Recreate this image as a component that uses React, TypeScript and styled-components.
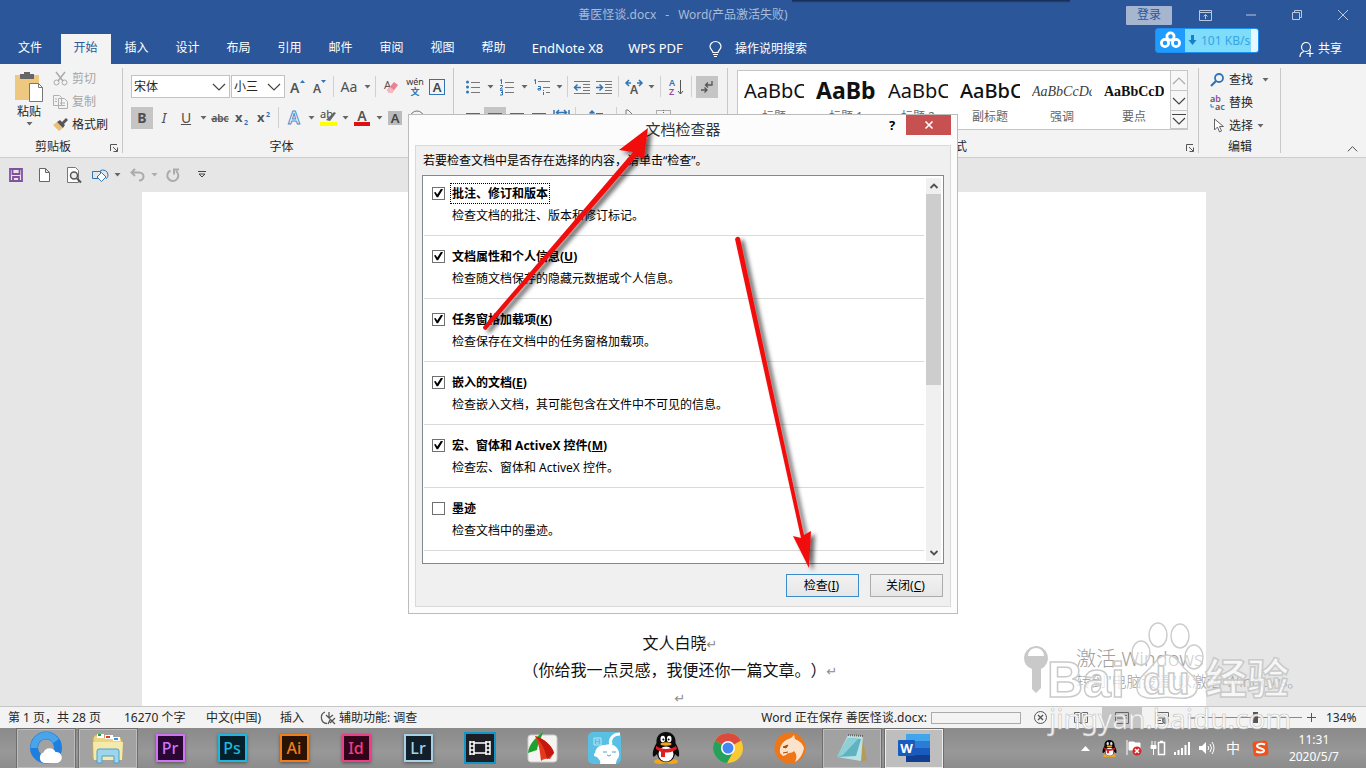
import React from "react";
import styled, { createGlobalStyle, css } from "styled-components";

const ui = `"Noto Sans", "Noto Sans CJK SC", sans-serif`;

const Global = createGlobalStyle`
  * { box-sizing: border-box; }
  body { margin: 0; font: 12px/16px ${ui}; color: #262626; }
  button, input, select { font: inherit; color: inherit; }
  svg { display: block; flex: none; overflow: visible; }
`;

const Window = styled.div`
  position: relative;
  display: flex;
  flex-direction: column;
  min-height: 100vh;
  overflow: hidden;
  background: #e6e6e6;
`;

/* ---------- title bar and tabs ---------- */
const Header = styled.header`
  position: relative;
  background: #2b579a;
  color: #fff;
`;
const TopShade = styled.div`
  position: absolute;
  top: 0;
  left: 58%;
  width: 278px;
  height: 3px;
  background: linear-gradient(#14294c, #2b579a);
`;
const TitleBar = styled.div`
  display: grid;
  grid-template-columns: 1fr auto 1fr;
  align-items: center;
  height: 34px;
  padding-bottom: 4px;
  color: #a9bcd9;
`;
const DocTitle = styled.div`
  grid-column: 2;
  display: flex;
  gap: 9px;
`;
const WindowTools = styled.div`
  display: flex;
  justify-content: flex-end;
  align-items: center;
`;
const Login = styled.button`
  width: 46px;
  height: 19px;
  margin-right: 10px;
  padding: 0;
  border: 0;
  border-radius: 1px;
  background: #a6b5d0;
  color: #2b579a;
  line-height: 18px;
`;
const WinButton = styled.button`
  display: grid;
  place-items: center;
  width: 46px;
  height: 30px;
  padding: 0;
  border: 0;
  background: none;
`;
const Tabs = styled.nav`
  display: flex;
  height: 30px;
`;
const Tab = styled.button<{ $w?: number; $active?: boolean; $latin?: boolean }>`
  width: ${p => p.$w ?? 51}px;
  padding: 0 1px 2px 0;
  border: 0;
  border-left: 1px solid transparent;
  background: ${p => (p.$active ? "#f3f3f3" : "none")};
  background-clip: padding-box;
  color: ${p => (p.$active ? "#2b579a" : "#fff")};
  font-size: ${p => (p.$latin ? 13 : 12)}px;
  white-space: nowrap;
`;
const TabTool = styled.button`
  display: flex;
  align-items: center;
  gap: 13px;
  margin-left: 14px;
  padding: 0;
  border: 0;
  background: none;
`;
const Share = styled(TabTool)`
  gap: 4px;
  margin-left: auto;
  margin-right: 24px;
`;
const NetBadge = styled.div`
  position: absolute;
  right: 107px;
  top: 28px;
  display: flex;
  width: 104px;
  height: 25px;
  border: 1px solid #1d8ff2;
  border-radius: 3px;
  overflow: hidden;
  background: linear-gradient(90deg, #1e9bff 29px, #7fdcfb 29px, #7fdcfb 95px, #e6f7ff 95px);
  color: #33a5e5;
  line-height: 23px;
`;
const NetSpeed = styled.span`
  display: flex;
  align-items: center;
  gap: 4px;
  padding-left: 3px;
  white-space: nowrap;
`;

/* ---------- ribbon ---------- */
const Ribbon = styled.section`
  display: flex;
  height: 94px;
  padding: 4px 0;
  border-bottom: 1px solid #cdcdcd;
  background: #f3f3f3;
`;
const Group = styled.div<{ $w: number }>`
  position: relative;
  display: grid;
  grid-template-rows: minmax(0, 1fr) 12px;
  flex: none;
  width: ${p => p.$w}px;
  padding: 0 8px;
  border-right: 1px solid #c8c8c8;
`;
const GroupLabel = styled.div<{ $launch?: boolean }>`
  display: flex;
  justify-content: center;
  align-items: center;
  padding-right: ${p => (p.$launch ? 16 : 0)}px;
  line-height: 12px;
`;
const Launcher = styled.button`
  position: absolute;
  right: 3px;
  bottom: 0;
  padding: 0;
  border: 0;
  background: none;
`;
const ClipArea = styled.div`
  display: flex;
  gap: 8px;
  padding: 4px 0 0 5px;
`;
const Paste = styled.button`
  display: flex;
  flex-direction: column;
  justify-content: flex-start;
  align-items: center;
  gap: 2px;
  width: 32px;
  padding: 0;
  border: 0;
  background: none;
`;
const SmallStack = styled.div`
  display: flex;
  flex-direction: column;
  margin-top: -5px;
`;
const SmallButton = styled.button<{ $off?: boolean }>`
  display: flex;
  align-items: center;
  gap: 4px;
  height: 23px;
  padding: 0;
  border: 0;
  background: none;
  color: ${p => (p.$off ? "#a6a6a6" : "#262626")};
  white-space: nowrap;
`;
const ToolRows = styled.div`
  display: flex;
  flex-direction: column;
  gap: 8px;
  padding-top: 7px;
`;
const ToolRow = styled.div`
  display: flex;
  align-items: center;
  height: 23px;
`;
const Tool = styled.button<{ $w?: number; $on?: boolean }>`
  display: flex;
  justify-content: center;
  align-items: center;
  flex: none;
  width: ${p => p.$w ?? 22}px;
  height: 22px;
  padding: 0;
  border: 0;
  background: ${p => (p.$on ? "#c5c5c5" : "none")};
  color: #505050;
  font-size: 14px;
`;
const Split = styled.i<{ $m?: number }>`
  flex: none;
  width: 1px;
  height: 21px;
  margin: 0 ${p => p.$m ?? 3}px;
  background: #d0d0d0;
`;
const SelectBox = styled.span<{ $w: number }>`
  position: relative;
  flex: none;
  width: ${p => p.$w}px;
  height: 23px;
  margin-right: 1px;
  svg {
    position: absolute;
    right: 4px;
    top: 8px;
    pointer-events: none;
  }
`;
const Select = styled.select`
  appearance: none;
  width: 100%;
  height: 100%;
  padding: 0 2px;
  border: 1px solid #c2c2c2;
  border-radius: 0;
  background: #fff;
`;
const Gallery = styled.div`
  display: flex;
  height: 60px;
  margin: 2px 2px 0 1px;
  border: 1px solid #c6c6c6;
  background: #fff;
`;
const StyleItem = styled.button`
  display: grid;
  grid-template-rows: 38px 16px;
  align-content: start;
  flex: none;
  width: 72px;
  padding: 0 6px;
  border: 0;
  background: none;
  color: #666;
`;
const Sample = styled.span<{ $kind: string }>`
  overflow: hidden;
  height: 38px;
  color: #111;
  font-size: 20px;
  line-height: 40px;
  text-align: left;
  white-space: nowrap;
  ${p => p.$kind === "h1" && css`font-size: 23px; font-weight: 700; line-height: 38px;`}
  ${p => p.$kind === "sub" && css`font-weight: 500;`}
  ${p => p.$kind === "em" && css`font: italic 14px/42px "Liberation Serif", serif; color: #404040;`}
  ${p => p.$kind === "key" && css`font: bold 14px/42px "Liberation Serif", serif;`}
`;
const GalleryNav = styled.div`
  display: grid;
  grid-template-rows: 20px 20px 1fr;
  width: 17px;
  margin-left: auto;
`;
const NavButton = styled.button`
  display: grid;
  place-items: center;
  padding: 0;
  border: 0;
  border-left: 1px solid #c6c6c6;
  border-bottom: 1px solid #c6c6c6;
  background: #f7f7f7;
`;
const EditStack = styled.div`
  padding-left: 3px;
`;
const Collapse = styled.button`
  align-self: flex-end;
  margin: 0 8px 0 auto;
  padding: 0;
  border: 0;
  background: none;
`;
const QuickBar = styled.div`
  display: flex;
  align-items: center;
  height: 34px;
  padding-left: 3px;
`;

/* ---------- document ---------- */
const Desk = styled.main`
  display: flex;
  flex: 1;
  min-height: 300px;
  padding: 0 160px 0 142px;
  overflow: hidden;
  background: #e6e6e6;
`;
const Page = styled.article`
  display: flex;
  flex: 1;
  flex-direction: column;
  justify-content: flex-end;
  align-items: center;
  margin-bottom: -4px;
  padding-left: 12px;
  background: #fff;
  color: #111;
  font: 16px/27px "Noto Sans CJK SC", sans-serif;
  text-spacing-trim: space-all;
`;
const Para = styled.p`
  height: 27px;
  margin: 0;
`;
const Mark = styled.span`
  color: #8c8c8c;
  font: 13px/20px "DejaVu Sans", sans-serif;
`;

/* ---------- status bar ---------- */
const Status = styled.footer`
  display: flex;
  align-items: center;
  height: 22px;
  padding: 0 8px;
  border-top: 1px solid #c6c6c6;
  background: #f3f3f3;
  white-space: nowrap;
`;
const StatusText = styled.span<{ $w?: number }>`
  display: flex;
  align-items: center;
  gap: 3px;
  min-width: ${p => p.$w ?? 0}px;
`;
const StatusRight = styled.div`
  display: flex;
  align-items: center;
  height: 21px;
  margin-left: auto;
`;
const Saving = styled.label`
  display: flex;
  align-items: center;
  gap: 4px;
`;
const SaveProgress = styled.progress`
  appearance: none;
  width: 90px;
  height: 12px;
  border: 1px solid #ababab;
  background: #f3f3f3;
  &::-webkit-progress-bar { background: #f3f3f3; }
`;
const Zoom = styled.input`
  appearance: none;
  width: 100px;
  height: 16px;
  margin: 0;
  background: linear-gradient(#8a8a8a, #8a8a8a) center / 100% 1px no-repeat;
  &::-webkit-slider-thumb {
    appearance: none;
    width: 5px;
    height: 11px;
    background: #555;
  }
`;
const Percent = styled.span`
  width: 32px;
  margin-left: 6px;
`;

/* ---------- taskbar ---------- */
const Taskbar = styled.div`
  display: flex;
  align-items: center;
  height: 40px;
  padding-left: 15px;
  background: linear-gradient(#8a8a8a, #989898 60%, #8c8c8c);
`;
const Task = styled.button<{ $open?: boolean; $front?: boolean }>`
  display: grid;
  place-items: center;
  flex: none;
  width: 58px;
  height: 39px;
  margin: 0 2px;
  padding: 0;
  border: 1px solid ${p => (p.$front ? "#eee" : p.$open ? "#bcbcbc" : "transparent")};
  outline: ${p => (p.$open ? "1px solid #6e6e6e" : "none")};
  background: ${p => (p.$front ? "#bebebe" : p.$open ? "#a2a2a2" : "none")};
`;
const Adobe = styled.span<{ $c: string; $bg: string }>`
  display: grid;
  place-items: center;
  width: 29px;
  height: 28px;
  border: 2px solid ${p => p.$c};
  background: ${p => p.$bg};
  box-shadow: 0 1px 3px #555;
  color: ${p => p.$c};
  font-size: 16px;
  line-height: 24px;
  font-weight: 500;
`;
const Tray = styled.div`
  display: flex;
  align-items: center;
  margin-left: auto;
  padding-right: 27px;
`;
const TrayItem = styled.button<{ $w?: number }>`
  display: grid;
  place-items: center;
  width: ${p => p.$w ?? 24}px;
  height: 30px;
  padding: 0;
  border: 0;
  background: none;
  color: #fff;
  font-size: 14px;
`;
const Clock = styled.time`
  margin-left: 15px;
  color: #fff;
  line-height: 17px;
  text-align: center;
`;

/* ---------- dialog ---------- */
const Dialog = styled.section`
  position: absolute;
  top: 114px;
  left: 50%;
  width: 550px;
  margin-left: -275px;
  border: 1px solid #bcbcbc;
  background: #fcfcfc;
  color: #000;
`;
const DialogHead = styled.div`
  display: grid;
  grid-template-columns: 1fr auto 1fr;
  height: 30px;
  padding: 0 6px;
`;
const DialogTitle = styled.h1`
  grid-column: 2;
  margin: 0;
  color: #333;
  font-size: 15px;
  font-weight: 400;
  line-height: 28px;
`;
const HeadButtons = styled.div`
  display: flex;
  justify-content: flex-end;
  align-items: flex-start;
`;
const HelpButton = styled.button`
  width: 28px;
  padding: 0;
  border: 0;
  background: none;
  font-weight: 700;
  font-size: 13px;
  line-height: 20px;
`;
const CloseButton = styled.button`
  display: grid;
  place-items: center;
  width: 45px;
  height: 20px;
  padding: 0;
  border: 0;
  background: #c75050;
`;
const DialogBody = styled.div`
  margin: 0 6px 6px;
  padding: 0 6px;
  border: 1px solid #d9d9d9;
  background: #f0f0f0;
`;
const Intro = styled.p`
  margin: 0;
  padding-left: 1px;
  line-height: 29px;
`;
const ListFrame = styled.div`
  display: flex;
  height: 389px;
  border: 1px solid #828790;
  background: #fff;
`;
const List = styled.ul`
  flex: 1;
  margin: 0;
  padding: 0 0 0 1px;
  overflow: hidden;
  list-style: none;
`;
const Item = styled.li`
  display: grid;
  grid-template-columns: 13px 1fr;
  grid-auto-rows: 22px;
  column-gap: 6px;
  align-items: center;
  padding: 9px 8px;
  border-bottom: 1px solid #d9d9d9;
  line-height: 18px;
  &:first-child { padding-top: 6px; }
`;
const Check = styled.input`
  appearance: none;
  display: grid;
  place-items: center;
  width: 13px;
  height: 13px;
  margin: 0;
  border: 1px solid #707070;
  background: #fff;
  &:checked::before {
    content: "";
    width: 9px;
    height: 9px;
    background: #000;
    clip-path: polygon(0 44%, 18% 40%, 36% 66%, 78% 4%, 100% 8%, 46% 96%, 30% 96%);
  }
`;
const ItemLabel = styled.label<{ $focus?: boolean }>`
  justify-self: start;
  padding: 1px 1px 0;
  font-weight: 700;
  outline: ${p => (p.$focus ? "1px dotted #000" : "none")};
`;
const ItemText = styled.span`
  grid-column: 2;
  padding: 2px 0 0 1px;
`;
const Scroll = styled.div`
  display: flex;
  flex-direction: column;
  width: 15px;
  margin: 2px;
  background: #f0f0f0;
`;
const ScrollArrow = styled.button`
  display: grid;
  place-items: center;
  height: 16px;
  padding: 0;
  border: 0;
  background: none;
`;
const Thumb = styled.div`
  height: 191px;
  margin-bottom: auto;
  background: #cdcdcd;
`;
const DialogFoot = styled.div`
  display: flex;
  justify-content: flex-end;
  gap: 11px;
  padding: 10px 1px 9px 0;
`;
const Push = styled.button<{ $main?: boolean }>`
  width: 73px;
  height: 23px;
  padding: 0 2px 0 0;
  border: 1px solid ${p => (p.$main ? "#3c8ccc" : "#acacac")};
  background: linear-gradient(#f2f2f2, #e6e6e6);
`;
const Pointers = styled.svg`
  position: absolute;
  left: 0;
  top: 0;
  pointer-events: none;
`;

/* ---------- watermarks ---------- */
const Overlay = styled.div`
  position: absolute;
  right: 50px;
  bottom: 28px;
  width: 300px;
  height: 126px;
  pointer-events: none;
`;

const Caret = ({ c = "#666" }: { c?: string }) => (
  <svg width="7" height="4" viewBox="0 0 7 4"><path d="M.5 0h6l-3 3.5z" fill={c} /></svg>
);
const Chev = ({ up = false, c = "#444", w = 14 }) => (
  <svg width={w} height="8" viewBox="0 0 14 8"><path d={up ? "M1 7l6-6 6 6" : "M1 1l6 6 6-6"} fill="none" stroke={c} strokeWidth="1.2" /></svg>
);
const Lines = ({ rows }: { rows: [number, number, number][] }) => (
  <svg width="16" height="16" viewBox="0 0 16 16">
    {rows.map(([x, y, l], i) => <path key={i} d={`M${x} ${y}.5h${l}`} stroke="#666" />)}
  </svg>
);
const LaunchIcon = () => (
  <svg width="9" height="9" viewBox="0 0 9 9"><path d="M.5 7V.5H7M3 3l4 4M7.500 3.500v4h-4" fill="none" stroke="#555" /></svg>
);
const BlueStroke = ({ d }: { d: string }) => <path d={d} fill="none" stroke="#2f75b5" strokeWidth="1.5" />;

const Penguin = ({ s }: { s: number }) => (
  <svg width={s} height={s} viewBox="0 0 32 32">
    <ellipse cx="10" cy="29.500" rx="6" ry="2.500" fill="#f5a51b" /><ellipse cx="22" cy="29.500" rx="6" ry="2.500" fill="#f5a51b" />
    <path d="M16 0c-6 0-10 4-9.500 11C5 14 2 19 3 24c1 2 3-1 4-2 1 5 4 8 9 8s8-3 9-8c1 1 3 4 4 2 1-5-2-10-3.500-13C26 4 22 0 16 0z" fill="#0b0b0b" />
    <ellipse cx="16" cy="22" rx="7.500" ry="7.500" fill="#fff" />
    <ellipse cx="12.800" cy="7" rx="2.300" ry="3.200" fill="#fff" /><ellipse cx="19.200" cy="7" rx="2.300" ry="3.200" fill="#fff" />
    <circle cx="13.400" cy="7.400" r="1" /><circle cx="18.600" cy="7.400" r="1" />
    <ellipse cx="16" cy="12" rx="5.500" ry="1.700" fill="#f5a51b" />
    <path d="M6 14c6 4 14 4 20 0l1 3c-4 3-8 3.500-12 3.500V25h-4v-5L6 17z" fill="#e31b23" />
  </svg>
);

const QQBrowser = () => (
  <svg width="34" height="34" viewBox="0 0 34 34">
    <circle cx="17" cy="16.500" r="12" fill="none" stroke="#1e7fe0" strokeWidth="8" />
    <path d="M5 17a12 12 0 0 1 22-7" fill="none" stroke="#4aa5e8" strokeWidth="7" />
    <path d="M15 32a5.500 5.500 0 0 1-.5-10.500 6.500 6.500 0 0 1 12-.5 5.600 5.600 0 0 1 2 11z" fill="#fff" />
  </svg>
);
const Explorer = () => (
  <svg width="34" height="32" viewBox="0 0 34 32">
    <path d="M2 6l2-3h8l2 3h16l1 3v18H2z" fill="#e9d585" stroke="#c4a94e" />
    <path d="M6 2h7v4H6zM14 3h8v4h-8zM22 5h7v4h-7z" fill="#fff" />
    <path d="M7 2h3v2H7z" fill="#27a035" /><path d="M15 4h4v2h-4z" fill="#d7402e" /><path d="M23 6h4v2h-4z" fill="#3d8fd9" />
    <path d="M2 10h30l-1 18H3z" fill="#f6e9ac" />
    <path d="M6 31V19q0-2 2-2h18q2 0 2 2v12h-5v-7H11v7z" fill="#9cd5ee" stroke="#4e9fc6" />
  </svg>
);
const Movie = () => (
  <svg width="32" height="32" viewBox="0 0 32 32">
    <rect x="1" y="1" width="30" height="30" fill="#1d1f24" stroke="#1296c8" strokeWidth="2" />
    <path d="M6 9v14M10 9v14M22 9v14M26 9v14M10 11h12M10 21h12M6 10h4M6 14h4M6 18h4M6 22h4M22 10h4M22 14h4M22 18h4M22 22h4" stroke="#fff" strokeWidth="1.500" />
  </svg>
);
const FastStone = () => (
  <svg width="32" height="32" viewBox="0 0 32 32">
    <rect x="2" y="3" width="29" height="27" rx="3" fill="#f4f4f2" stroke="#ccc" />
    <path d="M17 0C9 6 3 12 2 21l9-3c1-7 4-11 6-18z" fill="#1fa12e" />
    <path d="M9 4c4 8 5 15 6 25 4-3 6-2 9-2l4-6C26 13 18 7 9 4z" fill="#e5391c" /><path d="M9 4c7 7 10 13 12 23l7-6C26 13 18 7 9 4z" fill="#c4180f" />
  </svg>
);
const BlueBunny = () => (
  <svg width="33" height="32" viewBox="0 0 33 32">
    <rect width="33" height="32" rx="5" fill="#59c0e4" />
    <path d="M12 32c1-4-1-4-3-7-3 0-4-3-2-4 1-6 5-8 10-8 3-1 5-1 8 0 4 2 7 6 6 11-1 3-3 4-3 8z" fill="#fff" />
    <path d="M23 13c-2-5 1-11 9-11" fill="none" stroke="#fff" strokeWidth="3" />
    <path d="M15 20h4M24 20h4M19 23q2 2 4 0" stroke="#4aa6ca" fill="none" />
    <path d="M6 6h7v7H6zM8 8h3M8 11h3" stroke="#b8e6f6" fill="none" />
  </svg>
);
const Chrome = () => (
  <svg width="32" height="32" viewBox="0 0 32 32">
    <circle cx="16" cy="16" r="15" fill="#fbc932" />
    <path d="M16 16L3 8.500a15 15 0 0 1 26 0z" fill="#dc4a3d" />
    <path d="M3 8.500A15 15 0 0 0 15 31l6.500-11.500L16 16z" fill="#26a05a" />
    <circle cx="16" cy="16" r="7" fill="#fff" /><circle cx="16" cy="16" r="5.500" fill="#4486f4" />
  </svg>
);
const Cheetah = () => (
  <svg width="32" height="32" viewBox="0 0 32 32">
    <circle cx="16" cy="16" r="15.500" fill="#ef7617" />
    <path d="M6 21c-1-8 4-13 11-15l3-3 1 4c5 2 8 5 9 9-1 6-4 11-9 14 2-4 2-8-1-11-3 3-6 1-8 4l-3 1z" fill="#fbe3cb" />
    <path d="M9 15l5-2-2 3zM9 21l5-1" stroke="#a84a08" fill="#a84a08" />
  </svg>
);
const Notepad = () => (
  <svg width="32" height="30" viewBox="0 0 32 30">
    <path d="M26 3l5 24-6 2z" fill="#b59a5a" /><path d="M12 2l15 1-2 25-24-4z" fill="#b9e2e6" /><path d="M12 5l13 1-5 17-19 1z" fill="#5fb2bf" />
    <path d="M12 5l10 1-15 16-6 2z" fill="#8fd0d8" /><path d="M12 2l15 1" stroke="#666" strokeWidth="2" strokeDasharray="1 1" />
  </svg>
);
const WordIcon = () => (
  <svg width="32" height="30" viewBox="0 0 32 30">
    <rect x="8" y="1" width="24" height="7" fill="#41a5ee" /><rect x="8" y="8" width="24" height="7" fill="#2b7cd3" />
    <rect x="8" y="15" width="24" height="7" fill="#185abd" /><rect x="8" y="22" width="24" height="7" fill="#103f91" />
    <rect y="7" width="17" height="16" rx="1" fill="#185abd" />
    <text x="8.500" y="20" fontSize="13" fontWeight="700" fill="#fff" textAnchor="middle">W</text>
  </svg>
);

const items = [
  { t: "批注、修订和版本", k: "", d: "检查文档的批注、版本和修订标记。", on: true },
  { t: "文档属性和个人信息", k: "U", d: "检查随文档保存的隐藏元数据或个人信息。", on: true },
  { t: "任务窗格加载项", k: "K", d: "检查保存在文档中的任务窗格加载项。", on: true },
  { t: "嵌入的文档", k: "E", d: "检查嵌入文档，其可能包含在文件中不可见的信息。", on: true },
  { t: "宏、窗体和 ActiveX 控件", k: "M", d: "检查宏、窗体和 ActiveX 控件。", on: true },
  { t: "墨迹", k: "", d: "检查文档中的墨迹。", on: false },
];
const styleItems = [
  ["AaBbC", "标题", "h"], ["AaBb", "标题 1", "h1"], ["AaBbC", "标题 2", "h"],
  ["AaBbC", "副标题", "sub"], ["AaBbCcDc", "强调", "em"], ["AaBbCcD", "要点", "key"],
];

function FontGroup() {
  return (
    <Group $w={331}>
      <ToolRows>
        <ToolRow>
          <SelectBox $w={99}><Select aria-label="字体"><option>宋体</option></Select><Chev /></SelectBox>
          <SelectBox $w={54}><Select aria-label="字号"><option>小三</option></Select><Chev /></SelectBox>
          <Tool aria-label="增大字号"><svg width="16" height="18" viewBox="0 0 16 18"><text x="1" y="15" fontSize="14" fontWeight="600" fill="#555">A</text><path d="M11 5l2.500-3L16 5z" fill="#2f75b5" /></svg></Tool>
          <Tool aria-label="减小字号"><svg width="16" height="18" viewBox="0 0 16 18"><text x="2" y="15" fontSize="12" fontWeight="600" fill="#555">A</text><path d="M10 2h5l-2.500 3z" fill="#2f75b5" /></svg></Tool>
          <Split />
          <Tool $w={24}>Aa</Tool><Tool $w={12} aria-label="更多"><Caret /></Tool>
          <Split $m={2} />
          <Tool $w={26} aria-label="清除格式"><svg width="16" height="16" viewBox="0 0 16 16"><text x="1" y="10" fontSize="11" fill="#555">A</text><path d="M4 11l7-8 4 3-6 8H6z" fill="#ea8294" /><path d="M4 11l3-3 4 3-2 3H6z" fill="#f5b8c1" /></svg></Tool>
          <Tool aria-label="拼音指南"><svg width="18" height="18" viewBox="0 0 18 18"><text x="9" y="7" fontSize="9" textAnchor="middle" fill="#333">wén</text><text x="9" y="17" fontSize="9" fontWeight="700" textAnchor="middle" fill="#2f75b5">文</text></svg></Tool>
          <Tool aria-label="字符边框"><svg width="16" height="16" viewBox="0 0 16 16"><rect x=".5" y=".5" width="15" height="15" fill="none" stroke="#2f75b5" /><text x="8" y="13" fontSize="13" fontWeight="600" textAnchor="middle" fill="#444">A</text></svg></Tool>
        </ToolRow>
        <ToolRow>
          <Tool $on><b>B</b></Tool>
          <Tool><i>I</i></Tool>
          <Tool><u>U</u></Tool><Tool $w={12} aria-label="下划线"><Caret /></Tool>
          <Tool aria-label="删除线"><svg width="18" height="16" viewBox="0 0 18 16"><text x="9" y="12" fontSize="10" fontWeight="600" textAnchor="middle" fill="#555">abc</text><path d="M0 9h18" stroke="#555" /></svg></Tool>
          <Tool aria-label="下标"><svg width="14" height="16" viewBox="0 0 14 16"><text x="0" y="12" fontSize="13" fontWeight="700" fill="#555">x</text><text x="9" y="15" fontSize="7" fontWeight="700" fill="#2f75b5">2</text></svg></Tool>
          <Tool aria-label="上标"><svg width="14" height="16" viewBox="0 0 14 16"><text x="0" y="12" fontSize="13" fontWeight="700" fill="#555">x</text><text x="9" y="7" fontSize="7" fontWeight="700" fill="#2f75b5">2</text></svg></Tool>
          <Split />
          <Tool $w={24} aria-label="文本效果"><svg width="18" height="18" viewBox="0 0 18 18"><text x="9" y="15" fontSize="17" fontWeight="600" textAnchor="middle" fill="#fff" stroke="#4a8bcb">A</text></svg></Tool>
          <Tool $w={10} aria-label="更多"><Caret /></Tool>
          <Tool $w={24} aria-label="突出显示"><svg width="17" height="18" viewBox="0 0 17 18"><text x="0" y="9" fontSize="11" fill="#444">ab</text><path d="M6 11l8-8 2 1-6 8z" fill="#666" /><path d="M0 13h17v4H0z" fill="#ff0" /></svg></Tool>
          <Tool $w={10} aria-label="更多"><Caret /></Tool>
          <Tool $w={24} aria-label="字体颜色"><svg width="16" height="18" viewBox="0 0 16 18"><text x="8" y="12" fontSize="14" fontWeight="600" textAnchor="middle" fill="#555">A</text><path d="M0 13h16v4H0z" fill="#e01010" /></svg></Tool>
          <Tool $w={10} aria-label="更多"><Caret /></Tool>
          <Tool aria-label="字符底纹"><svg width="14" height="14" viewBox="0 0 14 14"><path d="M0 0h14v14H0z" fill="#bbb" /><text x="7" y="12" fontSize="13" fontWeight="600" textAnchor="middle" fill="#444">A</text></svg></Tool>
          <Tool aria-label="带圈字符"><svg width="16" height="16" viewBox="0 0 16 16"><circle cx="8" cy="8" r="7" fill="none" stroke="#777" /><path d="M4 7h8M8 4v2M5 10h6" stroke="#777" /></svg></Tool>
        </ToolRow>
      </ToolRows>
      <GroupLabel $launch>字体</GroupLabel>
    </Group>
  );
}

function ParagraphGroup() {
  const dots = [3, 8, 13];
  return (
    <Group $w={274}>
      <ToolRows>
        <ToolRow>
          <Tool aria-label="项目符号"><svg width="14" height="16" viewBox="0 0 14 16">{dots.map(y => <g key={y}><circle cx="1.500" cy={y} r="1.500" fill="#2f75b5" /><path d={`M5 ${y}.5h9`} stroke="#777" /></g>)}</svg></Tool>
          <Tool $w={12} aria-label="更多"><Caret /></Tool>
          <Tool aria-label="编号">
            <svg width="14" height="16" viewBox="0 0 14 16">
              <path d="M0 1.500l1.500-1V5M0 6.500h2.500v1.200L0 10h3M0 11.500h2.500V16H0M1 13.500h1.500" fill="none" stroke="#2f75b5" />
              <path d="M5 3.500h9M5 8.500h9M5 13.500h9" stroke="#777" />
            </svg>
          </Tool>
          <Tool $w={12} aria-label="更多"><Caret /></Tool>
          <Tool $w={24} aria-label="多级列表">
            <svg width="16" height="16" viewBox="0 0 16 16">
              <path d="M0 1.500l1.500-1V5M4 7.500h2.500V11H4V9.500h2.500M9.500 11v1M9.500 13v3" fill="none" stroke="#2f75b5" />
              <path d="M4 2.500h12M9 8.500h7M12 13.500h4" stroke="#777" />
            </svg>
          </Tool>
          <Tool $w={10} aria-label="更多"><Caret /></Tool>
          <Split />
          {[0, 1].map(k => <Tool key={k} aria-label={k ? "增加缩进" : "减少缩进"}><svg width="17" height="16" viewBox="0 0 17 16"><path d="M0 2.500h16M9 5.500h7M9 8.500h7M9 11.500h7M0 14.500h16" stroke="#777" /><BlueStroke d={k ? "M0 8.500h6M3.500 5.500l3 3-3 3" : "M7 8.500H1M3.500 5.500l-3 3 3 3"} /></svg></Tool>)}
          <Split />
          <Tool $w={24} aria-label="中文版式"><svg width="18" height="16" viewBox="0 0 18 16"><text x="9" y="15" fontSize="12" fontWeight="600" textAnchor="middle" fill="#555">A</text><BlueStroke d="M1 4h5M4 1L1 4l3 3M17 4h-5M14 1l3 3-3 3" /></svg></Tool>
          <Tool $w={10} aria-label="更多"><Caret /></Tool>
          <Split $m={4} />
          <Tool aria-label="排序"><svg width="16" height="18" viewBox="0 0 16 18"><text x="1" y="8" fontSize="9" fontWeight="600" fill="#2f75b5">A</text><text x="1" y="17" fontSize="9" fontWeight="600" fill="#8f4aa8">Z</text><path d="M12.500 2v14M10 13l2.500 3 2.500-3" fill="none" stroke="#555" /></svg></Tool>
          <Split $m={4} />
          <Tool $on aria-label="显示编辑标记"><svg width="14" height="16" viewBox="0 0 14 16"><path d="M12 2v4H6M8 3.500L5.500 6 8 8.500M1 11h6M4.500 8.500L7 11l-2.500 2.500" fill="none" stroke="#555" strokeWidth="1.300" /></svg></Tool>
        </ToolRow>
        <ToolRow>
          <Tool aria-label="左对齐"><Lines rows={[[1, 3, 14], [1, 7, 9], [1, 11, 14]]} /></Tool>
          <Tool $on aria-label="居中"><Lines rows={[[1, 3, 14], [4, 7, 8], [1, 11, 14]]} /></Tool>
          <Tool aria-label="右对齐"><Lines rows={[[1, 3, 14], [6, 7, 9], [1, 11, 14]]} /></Tool>
          <Tool aria-label="两端对齐"><Lines rows={[[1, 3, 14], [1, 7, 14], [1, 11, 14]]} /></Tool>
          <Tool aria-label="分散对齐"><svg width="17" height="16" viewBox="0 0 17 16"><BlueStroke d="M1 0v7M16 0v7M4 2.500h9M6 0L3.500 2.500 6 5M11 0l2.500 2.500L11 5" /></svg></Tool>
          <Split />
          <Tool $w={34} aria-label="行距"><svg width="16" height="16" viewBox="0 0 16 16"><BlueStroke d="M4 1v12M1.500 3.500L4 1l2.500 2.500" /><path d="M8 3.500h7M8 8.500h7" stroke="#666" /></svg></Tool>
          <Split />
          <Tool aria-label="底纹"><svg width="16" height="16" viewBox="0 0 16 16"><path d="M3 10V0h2l8 8-5 4z" fill="none" stroke="#777" /></svg></Tool>
          <Tool $w={42} aria-label="边框"><svg width="15" height="15" viewBox="0 0 15 15"><path d="M.5.5h14v14H.5zM7.500 0v15M0 7.500h15" fill="none" stroke="#666" strokeDasharray="1 1" /></svg></Tool>
        </ToolRow>
      </ToolRows>
      <GroupLabel $launch>段落</GroupLabel>
    </Group>
  );
}

export default function App() {
  return (
    <Window>
      <Global />
      <Header>
        <TopShade />
        <TitleBar>
          <DocTitle><span>善医怪谈.docx</span><span>-</span><span>Word(产品激活失败)</span></DocTitle>
          <WindowTools>
            <Login>登录</Login>
            <WinButton aria-label="功能区显示选项"><svg width="13" height="11" viewBox="0 0 13 11"><path d="M.5.5h12v10H.5zM.5 2.500h12M6.500 9V5M4.500 6.500l2-2 2 2" fill="none" stroke="#b9c8df" /></svg></WinButton>
            <WinButton aria-label="最小化"><svg width="10" height="2"><path d="M0 1h10" stroke="#b9c8df" /></svg></WinButton>
            <WinButton aria-label="还原"><svg width="10" height="10" viewBox="0 0 10 10"><path d="M.5 2.500h7v7h-7zM2.500 2V.5h7v7H8" fill="none" stroke="#b9c8df" /></svg></WinButton>
            <WinButton aria-label="关闭"><svg width="10" height="10" viewBox="0 0 10 10"><path d="M0 0l10 10M10 0L0 10" stroke="#b9c8df" /></svg></WinButton>
          </WindowTools>
        </TitleBar>
        <Tabs>
          <Tab $w={60}>文件</Tab>
          <Tab $active>开始</Tab>
          {["插入", "设计", "布局", "引用", "邮件", "审阅", "视图", "帮助"].map(t => <Tab key={t}>{t}</Tab>)}
          <Tab $w={97} $latin>EndNote X8</Tab>
          <Tab $w={79} $latin>WPS PDF</Tab>
          <TabTool><svg width="13" height="17" viewBox="0 0 13 17"><path d="M4 11.500c0-2-3-3-3-6a5.500 5 0 0 1 11 0c0 3-3 4-3 6zM4 13.500h5M5 15.500h3" fill="none" stroke="#fff" strokeWidth="1.200" /></svg>操作说明搜索</TabTool>
          <Share><svg width="15" height="17" viewBox="0 0 15 17"><circle cx="7" cy="6" r="4.500" fill="none" stroke="#fff" strokeWidth="1.200" /><path d="M1 16c0-3 2-5 4-5.500M11 9v7M7.500 12.500h7" fill="none" stroke="#fff" strokeWidth="1.200" /></svg>共享</Share>
        </Tabs>
        <NetBadge>
          <svg width="29" height="23" viewBox="0 0 29 23"><g fill="none" stroke="#fff" strokeWidth="2.800"><circle cx="14.500" cy="7.500" r="3.600" /><circle cx="9" cy="14" r="3.600" /><circle cx="20" cy="14" r="3.600" /></g></svg>
          <NetSpeed><svg width="9" height="11" viewBox="0 0 9 11"><path d="M3 0h3v5h2.500l-4 5-4-5H3z" fill="#1680cf" /></svg>101 KB/s</NetSpeed>
        </NetBadge>
      </Header>

      <Ribbon>
        <Group $w={123}>
          <ClipArea>
            <Paste>
              <svg width="28" height="30" viewBox="0 0 28 30"><path d="M0 3h24v25H0z" fill="#edc87e" /><path d="M5 2h4V0h6v2h4v5H5z" fill="#666" /><path d="M14.500 11.500h9l4 4v14h-13z" fill="#fff" stroke="#777" /><path d="M23.500 11.500v4h4" fill="none" stroke="#777" /></svg>
              粘贴<Caret />
            </Paste>
            <SmallStack>
              <SmallButton $off><svg width="15" height="15" viewBox="0 0 15 15"><path d="M3 1l7 9M12 1L5 10" stroke="#aaa" strokeWidth="1.500" /><circle cx="3.500" cy="11.500" r="2.500" fill="none" stroke="#aaa" /><circle cx="11.500" cy="11.500" r="2.500" fill="none" stroke="#aaa" /></svg>剪切</SmallButton>
              <SmallButton $off><svg width="15" height="14" viewBox="0 0 15 14"><path d="M.5.5h6l2 2v8h-8zM5.500 3.500h6l3 3v7h-9zM7 8h5M7 10.500h5M2 4h2M2 6.500h2" fill="#f3f3f3" stroke="#b0b0b0" /></svg>复制</SmallButton>
              <SmallButton><svg width="15" height="14" viewBox="0 0 15 14"><path d="M0 7l4-3 6 6-4 3z" fill="#e9c07a" /><path d="M4 4l3-2 5 5-2 3zM9 4l4-4 2 2-4 4z" fill="#555" /></svg>格式刷</SmallButton>
            </SmallStack>
          </ClipArea>
          <GroupLabel $launch>剪贴板</GroupLabel>
          <Launcher aria-label="剪贴板选项"><LaunchIcon /></Launcher>
        </Group>
        <FontGroup />
        <ParagraphGroup />
        <Group $w={471}>
          <Gallery>
            {styleItems.map(([s, n, k]) => <StyleItem key={n}><Sample $kind={k}>{s}</Sample><span>{n}</span></StyleItem>)}
            <GalleryNav>
              <NavButton aria-label="上一行"><Chev up c="#aaa" /></NavButton>
              <NavButton aria-label="下一行"><Chev /></NavButton>
              <NavButton aria-label="其他样式"><svg width="14" height="12" viewBox="0 0 14 12"><path d="M0 .5h14M1 4l6 6 6-6" fill="none" stroke="#444" strokeWidth="1.200" /></svg></NavButton>
            </GalleryNav>
          </Gallery>
          <GroupLabel $launch>样式</GroupLabel>
          <Launcher aria-label="样式选项"><LaunchIcon /></Launcher>
        </Group>
        <Group $w={82}>
          <EditStack>
            <SmallButton><svg width="15" height="14" viewBox="0 0 15 14"><circle cx="9" cy="5" r="4" fill="none" stroke="#2f75b5" strokeWidth="1.800" /><path d="M6 8l-5 5" stroke="#2f75b5" strokeWidth="2.200" /></svg>查找<Tool $w={16} as="span"><Caret /></Tool></SmallButton>
            <SmallButton><svg width="15" height="16" viewBox="0 0 15 16"><text x="0" y="7" fontSize="9" fontWeight="600" fill="#555">a<tspan fill="#8f4aa8">b</tspan></text><text x="5" y="15" fontSize="9" fontWeight="600" fill="#555">a<tspan fill="#2f75b5">c</tspan></text><path d="M1 9v3h3" fill="none" stroke="#2f75b5" /></svg>替换</SmallButton>
            <SmallButton><svg width="15" height="15" viewBox="0 0 15 15"><path d="M4.500 1v11l3-3 2 5 2-1-2-4.500h4z" fill="#fff" stroke="#666" /></svg>选择<Caret /></SmallButton>
          </EditStack>
          <GroupLabel>编辑</GroupLabel>
        </Group>
        <Collapse aria-label="折叠功能区"><Chev up w={11} /></Collapse>
      </Ribbon>

      <QuickBar>
        <Tool $w={26} aria-label="保存"><svg width="14" height="14" viewBox="0 0 14 14"><path d="M1 1h12v12H1zM3.500 1v5h7V1M4 13V9h6v4" fill="none" stroke="#8151a0" strokeWidth="1.800" /></svg></Tool>
        <Tool $w={30} aria-label="新建"><svg width="11" height="14" viewBox="0 0 11 14"><path d="M.5.500h6l4 4v9H.5zM6.500.5v4h4" fill="#fff" stroke="#666" /></svg></Tool>
        <Tool $w={30} aria-label="预览"><svg width="14" height="16" viewBox="0 0 14 16"><path d="M.5.500h8l3 3v12H.5z" fill="#fff" stroke="#777" /><circle cx="7" cy="8.500" r="3.500" fill="#eee" stroke="#555" strokeWidth="1.500" /><path d="M10 11.500l4 4" stroke="#555" strokeWidth="2" /></svg></Tool>
        <Tool aria-label="形状"><svg width="17" height="15" viewBox="0 0 17 15"><path d="M8 3a5 5 0 0 1 8 4c0 2-1 3-2 4" fill="none" stroke="#2f75b5" /><path d="M.5 3.500h8v7h-8z" fill="#e6e6e6" stroke="#2f75b5" /><path d="M9.500 4.500l4.500 4.500-4.500 4.500L5 9z" fill="#fff" stroke="#2f75b5" /></svg></Tool>
        <Tool $w={12} aria-label="更多"><Caret /></Tool>
        <Tool $w={28} aria-label="撤消"><svg width="15" height="14" viewBox="0 0 15 14"><path d="M5 1L1.500 4.500 5 8M2 4.500h7c6 0 6 8 0 8" fill="none" stroke="#ababab" strokeWidth="2" /></svg></Tool>
        <Tool $w={6} aria-label="更多"><Caret c="#ababab" /></Tool>
        <Tool $w={32} aria-label="重复"><svg width="14" height="14" viewBox="0 0 14 14"><path d="M4.500 2.500a5.500 5.500 0 1 0 5.500.5M8 6.500V1.500h5" fill="none" stroke="#ababab" strokeWidth="2" /></svg></Tool>
        <Tool $w={26} aria-label="自定义快速访问工具栏"><svg width="8" height="8" viewBox="0 0 8 8"><path d="M0 .5h8M1 3l3 3 3-3z" fill="none" stroke="#444" /></svg></Tool>
      </QuickBar>

      <Desk>
        <Page>
          <Para>文人白晓<Mark>↵</Mark></Para>
          <Para>（你给我一点灵感，我便还你一篇文章。）<Mark>↵</Mark></Para>
          <Para><Mark>↵</Mark></Para>
        </Page>
      </Desk>

      <Status>
        <StatusText $w={116}>第 1 页，共 28 页</StatusText>
        <StatusText $w={82}>16270 个字</StatusText>
        <StatusText $w={74}>中文(中国)</StatusText>
        <StatusText $w={40}>插入</StatusText>
        <StatusText><svg width="16" height="14" viewBox="0 0 16 14"><path d="M5 1a6 6 0 0 0 2 11.500M9 1v5M6 4l3 3 4-3M8 13l2-4M15 13L9 7M15 7l-5 5" fill="none" stroke="#555" strokeWidth="1.300" /></svg>辅助功能: 调查</StatusText>
        <StatusRight>
          <Saving>Word 正在保存 善医怪谈.docx:<SaveProgress value={0} max={100} /></Saving>
          <Tool $w={38} aria-label="取消"><svg width="13" height="13" viewBox="0 0 13 13"><circle cx="6.500" cy="6.500" r="6" fill="none" stroke="#555" /><path d="M4 4l5 5M9 4l-5 5" stroke="#555" strokeWidth="1.300" /></svg></Tool>
          <Tool $w={43} aria-label="阅读视图"><svg width="14" height="12" viewBox="0 0 14 12"><path d="M.5.500h5l1.500 1 1.500-1h5v10h-5l-1.500 1-1.500-1h-5zM7 2v9M2 3h3M2 5.500h3M2 8h3M9 3h3M9 5.500h3M9 8h3" fill="none" stroke="#666" /></svg></Tool>
          <Tool $w={40} $on aria-label="页面视图"><svg width="14" height="12" viewBox="0 0 14 12"><path d="M.5.500h13v11H.5zM2 3.500h10M2 6h10M2 8.500h7" fill="none" stroke="#666" /></svg></Tool>
          <Tool $w={40} aria-label="Web 视图"><svg width="14" height="12" viewBox="0 0 14 12"><path d="M13.500 5V.5H.5v11H8M2 3.500h9M2 6h6M2 8.500h4" fill="none" stroke="#666" /><circle cx="10.500" cy="8.500" r="3" fill="#999" stroke="#555" /></svg></Tool>
          <Tool $w={20} aria-label="缩小"><svg width="8" height="2"><path d="M0 1h8" stroke="#555" /></svg></Tool>
          <Zoom type="range" min={0} max={100} defaultValue={54} aria-label="缩放" />
          <Tool $w={18} aria-label="放大"><svg width="9" height="9"><path d="M0 4.500h9M4.500 0v9" stroke="#555" /></svg></Tool>
          <Percent>134%</Percent>
        </StatusRight>
      </Status>

      <Taskbar>
        <Task $open aria-label="QQ浏览器"><QQBrowser /></Task>
        <Task $open aria-label="资源管理器"><Explorer /></Task>
        <Task><Adobe $c="#cf74f0" $bg="#2a0634">Pr</Adobe></Task>
        <Task><Adobe $c="#1fb8dc" $bg="#04202c">Ps</Adobe></Task>
        <Task><Adobe $c="#ef7d1a" $bg="#2a1303">Ai</Adobe></Task>
        <Task><Adobe $c="#ea3f88" $bg="#31041a">Id</Adobe></Task>
        <Task><Adobe $c="#a9d0e4" $bg="#101f29">Lr</Adobe></Task>
        <Task aria-label="视频编辑"><Movie /></Task>
        <Task aria-label="截图"><FastStone /></Task>
        <Task aria-label="便签"><BlueBunny /></Task>
        <Task aria-label="QQ"><Penguin s={32} /></Task>
        <Task aria-label="Chrome"><Chrome /></Task>
        <Task aria-label="猎豹"><Cheetah /></Task>
        <Task $open aria-label="记事本"><Notepad /></Task>
        <Task $open $front aria-label="Word"><WordIcon /></Task>
        <Tray>
          <TrayItem aria-label="显示隐藏的图标"><svg width="9" height="5"><path d="M0 5l4.500-5L9 5z" fill="#fff" /></svg></TrayItem>
          <TrayItem aria-label="QQ"><Penguin s={17} /></TrayItem>
          <TrayItem aria-label="操作中心"><svg width="16" height="16" viewBox="0 0 16 16"><path d="M1 0v15M3 2h5l1 1h5v7H3z" fill="#fff" stroke="#fff" /><circle cx="11" cy="11" r="4.500" fill="#cf2b2b" /><path d="M9 9l4 4M13 9l-4 4" stroke="#fff" strokeWidth="1.500" /></svg></TrayItem>
          <TrayItem aria-label="电源"><svg width="16" height="16" viewBox="0 0 16 16"><path d="M2 1v4M5 1v4M1 5.500h5v3H1zM3.500 9v6" fill="#fff" stroke="#fff" /><path d="M8.500 2.500h6v12h-6zM10 1.500h3" fill="none" stroke="#fff" strokeWidth="1.500" /></svg></TrayItem>
          <TrayItem aria-label="网络"><svg width="16" height="13" viewBox="0 0 16 13"><path d="M1 10v3M4.500 8v5M8 6v7M11.500 3v10M15 0v13" stroke="#fff" strokeWidth="2" /></svg></TrayItem>
          <TrayItem aria-label="音量"><svg width="16" height="14" viewBox="0 0 16 14"><path d="M1 5h3l4-4v12L4 9H1z" fill="#fff" /><path d="M10 5q1.500 2 0 4M12 3q3 4 0 8M14 1q4 6 0 12" fill="none" stroke="#fff" /></svg></TrayItem>
          <TrayItem $w={30}>中</TrayItem>
          <TrayItem $w={26} aria-label="搜狗输入法"><svg width="17" height="17" viewBox="0 0 17 17"><rect x="1" y="1" width="15" height="15" rx="3" fill="#f0521e" transform="rotate(-6 8.500 8.500)" /><path d="M13 4.500c-4-1.500-8-.5-8 1.500 0 2.500 7 2 7 4.500 0 2-4 2.500-8 1" fill="none" stroke="#fff" strokeWidth="2" /></svg></TrayItem>
          <Clock>11:31<br />2020/5/7</Clock>
        </Tray>
      </Taskbar>

      <Overlay>
        <svg width="300" height="126" viewBox="1016 614 300 126">
          <path d="M1024 658a12 12 0 1 1 17 11v19l-5 5-4-4v-20a12 12 0 0 1-8-11zm4-2h16a8 8 0 0 0-16 0z" fillRule="evenodd" fill="#c9c9c9" />
          <g fill="#a0a0a0" fontFamily='"Noto Sans","Noto Sans CJK SC",sans-serif' fontWeight="300">
            <text x="1076" y="666" fontSize="20">激活 Windows</text>
            <text x="1076" y="687" fontSize="15">转到"电脑设置"以激活 Windows。</text>
          </g>
          <g fill="#fff" fillOpacity=".5" stroke="#cdcdcd" strokeWidth="1.500">
            <ellipse cx="1158" cy="635" rx="9" ry="12" /><ellipse cx="1180" cy="636" rx="9" ry="12" />
            <ellipse cx="1141" cy="653" rx="9" ry="12" /><ellipse cx="1194" cy="657" rx="9" ry="12" />
            <path d="M1167 655c9 0 12 8 18 14 8 7 14 12 12 20-2 9-12 10-20 9-7-1-13-1-20 0-8 1-19 0-20-9-1-8 5-13 12-20 6-6 10-14 18-14z" />
          </g>
          <g fill="#fff" fillOpacity=".7" stroke="#cacaca" strokeWidth="1.500" fontWeight="700">
            <text x="1047" y="697" fontSize="50" fontFamily='"Liberation Sans",sans-serif'>Bai</text>
            <text x="1143" y="694" fontSize="38" fontFamily='"Liberation Sans",sans-serif'>du</text>
            <text x="1205" y="694" fontSize="42" fontFamily='"Noto Sans CJK SC",sans-serif'>经验</text>
          </g>
          <text x="1049" y="729" fontSize="28" fill="#fff" fillOpacity=".9" stroke="#c0c0c0" strokeWidth=".6" fontFamily='"Noto Sans",sans-serif'>jingyan.baidu.com</text>
        </svg>
      </Overlay>

      <Dialog role="dialog" aria-labelledby="dlg-title">
        <DialogHead>
          <DialogTitle id="dlg-title">文档检查器</DialogTitle>
          <HeadButtons>
            <HelpButton>?</HelpButton>
            <CloseButton aria-label="关闭"><svg width="8" height="8" viewBox="0 0 8 8"><path d="M.5.500l7 7M7.500.5l-7 7" stroke="#fff" strokeWidth="1.600" /></svg></CloseButton>
          </HeadButtons>
        </DialogHead>
        <DialogBody>
          <Intro>若要检查文档中是否存在选择的内容，请单击“检查”。</Intro>
          <ListFrame>
            <List>
              {items.map((it, i) => (
                <Item key={it.t}>
                  <Check type="checkbox" id={`c${i}`} defaultChecked={it.on} />
                  <ItemLabel htmlFor={`c${i}`} $focus={i === 0}>{it.t}{it.k && <>(<u>{it.k}</u>)</>}</ItemLabel>
                  <ItemText>{it.d}</ItemText>
                </Item>
              ))}
            </List>
            <Scroll>
              <ScrollArrow aria-label="向上"><svg width="8" height="6" viewBox="0 0 8 6"><path d="M.5 5L4 1.500 7.500 5" fill="none" stroke="#505050" strokeWidth="1.800" /></svg></ScrollArrow>
              <Thumb />
              <ScrollArrow aria-label="向下"><svg width="8" height="6" viewBox="0 0 8 6"><path d="M.5 1L4 4.500 7.500 1" fill="none" stroke="#505050" strokeWidth="1.800" /></svg></ScrollArrow>
            </Scroll>
          </ListFrame>
          <DialogFoot>
            <Push $main>检查(<u>I</u>)</Push>
            <Push>关闭(<u>C</u>)</Push>
          </DialogFoot>
        </DialogBody>
        <Pointers width="548" height="498" viewBox="409 115 548 498">
          <defs>
            <filter id="shade" x="-20%" y="-20%" width="150%" height="150%"><feDropShadow dx="4" dy="3" stdDeviation="2" floodColor="#000" floodOpacity=".6" /></filter>
          </defs>
          <g fill="#f20d0d" filter="url(#shade)">
            <path d="M483 327q0 3 3 3L637 156l7 3 4-31-29 22 14 2z" />
            <path d="M735 239q2-4 5-1l64 297 7-4-2 37-16-32 8 2z" />
          </g>
        </Pointers>
      </Dialog>
    </Window>
  );
}
